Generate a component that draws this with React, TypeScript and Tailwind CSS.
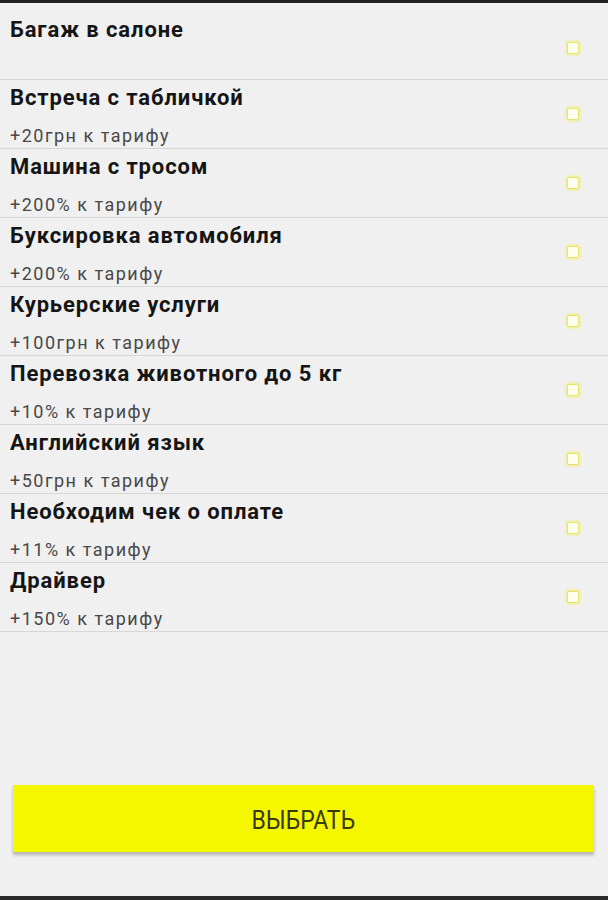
import { useState } from "react";

type Option = {
  id: number;
  title: string;
  price?: string;
};

const options: Option[] = [
  { id: 1, title: "Багаж в салоне" },
  { id: 2, title: "Встреча с табличкой", price: "+20грн к тарифу" },
  { id: 3, title: "Машина с тросом", price: "+200% к тарифу" },
  { id: 4, title: "Буксировка автомобиля", price: "+200% к тарифу" },
  { id: 5, title: "Курьерские услуги", price: "+100грн к тарифу" },
  { id: 6, title: "Перевозка животного до 5 кг", price: "+10% к тарифу" },
  { id: 7, title: "Английский язык", price: "+50грн к тарифу" },
  { id: 8, title: "Необходим чек о оплате", price: "+11% к тарифу" },
  { id: 9, title: "Драйвер", price: "+150% к тарифу" },
];

function Check({ checked, onClick }: { checked: boolean; onClick: () => void }) {
  return (
    <button
      onClick={onClick}
      className={`w-[12px] h-[12px] rounded-[2px] border border-[#e6e36a] shadow-[0_0_3px_1px_#f1ee7c] ${
        checked ? "bg-[#e8e600]" : "bg-[#fffff0]"
      }`}
    />
  );
}

export default function App() {
  const [selected, setSelected] = useState<number[]>([]);

  const toggle = (id: number) =>
    setSelected((prev) => (prev.includes(id) ? prev.filter((x) => x !== id) : [...prev, id]));

  return (
    <div className="w-[608px] h-[900px] flex flex-col bg-[#f0f0f0] font-['Roboto','Liberation_Sans',sans-serif]">
      <div className="h-[3px] bg-[#222]" />

      {/* Options list */}
      <div className="flex flex-col">
        {options.map((opt) =>
          opt.price ? (
            <div key={opt.id} className="flex items-center border-b border-[#d7d7d7] pl-[10px] pr-[29px]">
              <div className="flex-1 pt-[4px]">
                <div className="text-[22px] leading-[28px] tracking-[0.9px] font-bold text-[#151515]">{opt.title}</div>
                <div className="mt-[12px] text-[18px] leading-[24px] tracking-[1.5px] text-[#484848]">{opt.price}</div>
              </div>
              <Check checked={selected.includes(opt.id)} onClick={() => toggle(opt.id)} />
            </div>
          ) : (
            <div key={opt.id} className="h-[77px] flex border-b border-[#d7d7d7] pl-[10px] pr-[29px]">
              <div className="flex-1 pt-[13px] text-[22px] leading-[28px] tracking-[0.9px] font-bold text-[#151515]">
                {opt.title}
              </div>
              <div className="pt-[33px]">
                <Check checked={selected.includes(opt.id)} onClick={() => toggle(opt.id)} />
              </div>
            </div>
          )
        )}
      </div>

      <div className="flex-1" />

      {/* Select button */}
      <div className="px-[13px] pr-[14px] pb-[44px]">
        <button className="w-full h-[67px] bg-[#f5f700] shadow-[0_3px_3px_rgba(0,0,0,0.25)] flex items-center justify-center pt-[4px]">
          <span className="inline-block scale-x-[0.92] text-[25px] text-[#3a3a10]">ВЫБРАТЬ</span>
        </button>
      </div>

      <div className="h-[4px] bg-[#2a2a2a]" />
    </div>
  );
}
